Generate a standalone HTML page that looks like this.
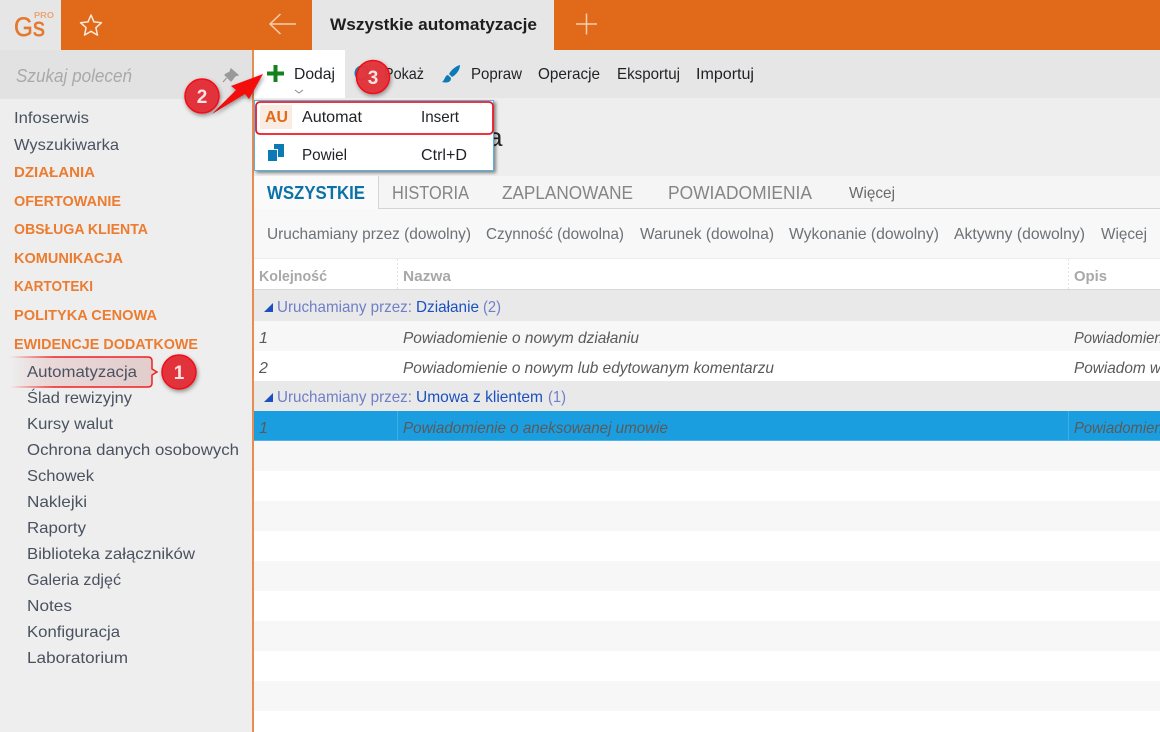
<!DOCTYPE html>
<html><head><meta charset="utf-8"><style>
html,body{margin:0;padding:0;width:1160px;height:732px;overflow:hidden;background:#fff}
svg{display:block}
text{font-family:"Liberation Sans",sans-serif;font-size:16px}
.s{fill:#4a5260}
.h{fill:#ec7c30;font-weight:bold;font-size:15px}
.t{fill:#1f2125}
.f{fill:#6c7176}
.c{fill:#a8a8a8;font-weight:bold;font-size:15px}
.i{fill:#5a5a5a;font-style:italic}
.g{fill:#6f7fc8}
.b{fill:#1b50c0}
.tab{fill:#858585;font-size:18px}
</style></head><body>
<svg width="1160" height="732" viewBox="0 0 1160 732" xmlns="http://www.w3.org/2000/svg">
<defs>
<filter id="sh" x="-30%" y="-30%" width="160%" height="160%"><feDropShadow dx="1" dy="2" stdDeviation="2" flood-color="#000" flood-opacity=".4"/></filter>
<filter id="sh2" x="-10%" y="-20%" width="120%" height="150%"><feDropShadow dx="2" dy="2" stdDeviation="1.5" flood-color="#000" flood-opacity=".45"/></filter>
<linearGradient id="fade" x1="0" x2="1" y1="0" y2="0"><stop offset="0" stop-color="#e8d4d4" stop-opacity="0"/><stop offset=".25" stop-color="#ead8d8"/><stop offset="1" stop-color="#e2cccc"/></linearGradient>
<linearGradient id="fl" x1="0" x2="1" y1="0" y2="0"><stop offset="0" stop-color="#f00" stop-opacity="0"/><stop offset=".3" stop-color="#f02020"/></linearGradient>
</defs>

<!-- top bar -->
<rect width="1160" height="50" fill="#e0691a"/>
<rect width="61" height="50" fill="#e6e6e6"/>
<text x="14" y="36" style="font-size:27px;fill:#e4792f;stroke:#e4792f;stroke-width:.5" textLength="31" lengthAdjust="spacingAndGlyphs">Gs</text>
<text x="34" y="18" style="font-size:8px;font-weight:bold;fill:#e9a574" textLength="20" lengthAdjust="spacingAndGlyphs">PRO</text>
<path d="M91 15l3 6.900 7.500.8-5.600 5 1.600 7.400-6.500-3.800-6.500 3.800 1.600-7.400-5.600-5 7.500-.8z" fill="none" stroke="#fbeade" stroke-width="1.500" stroke-linejoin="round"/>
<path d="M296 24H270M280.500 14L270 24l10.500 10" fill="none" stroke="#f6cfb0" stroke-width="1.500"/>
<rect x="312" y="0" width="242" height="50" fill="#e6e6e6"/>
<text x="330" y="30" style="font-size:17px;font-weight:bold;fill:#1e1e1e" textLength="207" lengthAdjust="spacingAndGlyphs">Wszystkie automatyzacje</text>
<path d="M586.500 13.500v21M576 24h21" stroke="#f6cfb0" stroke-width="1.500" fill="none"/>

<!-- sidebar -->
<rect x="0" y="50" width="252" height="682" fill="#eeeeee"/>
<rect x="0" y="50" width="252" height="49" fill="#e2e2e2"/>
<text x="16" y="82" style="font-size:18px;font-style:italic;fill:#a9a9a9" textLength="116" lengthAdjust="spacingAndGlyphs">Szukaj poleceń</text>
<path d="M231 69l7 6-3 1-3 4-1 1-6-6 1-1 4-2zM226.500 78l-3.500 4" fill="#999" stroke="#999" stroke-width="1.200"/>
<rect x="252" y="50" width="2" height="682" fill="#e58d52"/>

<g>
<text class="s" x="14" y="123" textLength="75" lengthAdjust="spacingAndGlyphs">Infoserwis</text>
<text class="s" x="14" y="150" textLength="105" lengthAdjust="spacingAndGlyphs">Wyszukiwarka</text>
<text class="h" x="14" y="177" textLength="81" lengthAdjust="spacingAndGlyphs">DZIAŁANIA</text>
<text class="h" x="14" y="206" textLength="107" lengthAdjust="spacingAndGlyphs">OFERTOWANIE</text>
<text class="h" x="14" y="234" textLength="134" lengthAdjust="spacingAndGlyphs">OBSŁUGA KLIENTA</text>
<text class="h" x="14" y="263" textLength="109" lengthAdjust="spacingAndGlyphs">KOMUNIKACJA</text>
<text class="h" x="14" y="291" textLength="79" lengthAdjust="spacingAndGlyphs">KARTOTEKI</text>
<text class="h" x="14" y="320" textLength="143" lengthAdjust="spacingAndGlyphs">POLITYKA CENOWA</text>
<text class="h" x="14" y="349" textLength="184" lengthAdjust="spacingAndGlyphs">EWIDENCJE DODATKOWE</text>
</g>

<!-- Callout 1 -->
<path d="M10 357H148q4 0 4 4v8l5 3-5 3v8q0 4-4 4H10z" fill="url(#fade)"/>
<path d="M10 357H148q4 0 4 4v8l5 3-5 3v8q0 4-4 4H10" fill="none" stroke="url(#fl)" stroke-width="1.500"/>

<g>
<text class="s" x="27" y="377" textLength="110" lengthAdjust="spacingAndGlyphs">Automatyzacja</text>
<text class="s" x="27" y="403" textLength="105" lengthAdjust="spacingAndGlyphs">Ślad rewizyjny</text>
<text class="s" x="27" y="429" textLength="86" lengthAdjust="spacingAndGlyphs">Kursy walut</text>
<text class="s" x="27" y="455" textLength="212" lengthAdjust="spacingAndGlyphs">Ochrona danych osobowych</text>
<text class="s" x="27" y="481" textLength="67" lengthAdjust="spacingAndGlyphs">Schowek</text>
<text class="s" x="27" y="507" textLength="60" lengthAdjust="spacingAndGlyphs">Naklejki</text>
<text class="s" x="27" y="533" textLength="59" lengthAdjust="spacingAndGlyphs">Raporty</text>
<text class="s" x="27" y="559" textLength="168" lengthAdjust="spacingAndGlyphs">Biblioteka załączników</text>
<text class="s" x="27" y="585" textLength="94" lengthAdjust="spacingAndGlyphs">Galeria zdjęć</text>
<text class="s" x="27" y="611" textLength="45" lengthAdjust="spacingAndGlyphs">Notes</text>
<text class="s" x="27" y="637" textLength="93" lengthAdjust="spacingAndGlyphs">Konfiguracja</text>
<text class="s" x="27" y="663" textLength="101" lengthAdjust="spacingAndGlyphs">Laboratorium</text>
</g>

<!-- toolbar -->
<rect x="254" y="50" width="906" height="48" fill="#e6e6e6"/>
<rect x="254" y="50" width="91" height="50" fill="#fff"/>
<path d="M275.500 65v17M267 73.500h17" stroke="#14801e" stroke-width="4" fill="none"/>
<text class="t" x="294" y="79" textLength="41" lengthAdjust="spacingAndGlyphs">Dodaj</text>
<path d="M295 90l4 3 4-3" fill="none" stroke="#888" stroke-width="1"/>
<circle cx="362" cy="73" r="6.500" fill="none" stroke="#1a7fb5" stroke-width="2"/>
<text class="t" x="384" y="79" textLength="40" lengthAdjust="spacingAndGlyphs">Pokaż</text>
<path d="M460 65c-4 1-9 5-11 9l3 3c4-2 8-7 8-12zM448 75c-3 0-3 5-6 7 4 1 9 1 9-4z" fill="#0c7ab5"/>
<text class="t" x="471" y="79" textLength="51" lengthAdjust="spacingAndGlyphs">Popraw</text>
<text class="t" x="538" y="79" textLength="62" lengthAdjust="spacingAndGlyphs">Operacje</text>
<text class="t" x="617" y="79" textLength="63" lengthAdjust="spacingAndGlyphs">Eksportuj</text>
<text class="t" x="696" y="79" textLength="58" lengthAdjust="spacingAndGlyphs">Importuj</text>

<!-- header zone -->
<rect x="254" y="98" width="906" height="78" fill="#eeeeee"/>
<text x="488" y="146" style="font-size:26px;fill:#222">a</text>

<!-- tabs -->
<rect x="254" y="176" width="906" height="33" fill="#f5f5f5"/>
<rect x="254" y="208" width="906" height="1" fill="#d4d4d4"/>
<rect x="254" y="176" width="124" height="33" fill="#fafafa"/>
<rect x="378" y="176" width="1" height="33" fill="#d4d4d4"/>
<text x="267" y="199" style="font-size:18px;font-weight:bold;fill:#0b72a8" textLength="98" lengthAdjust="spacingAndGlyphs">WSZYSTKIE</text>
<text class="tab" x="392" y="199" textLength="77" lengthAdjust="spacingAndGlyphs">HISTORIA</text>
<text class="tab" x="502" y="199" textLength="131" lengthAdjust="spacingAndGlyphs">ZAPLANOWANE</text>
<text class="tab" x="668" y="199" textLength="144" lengthAdjust="spacingAndGlyphs">POWIADOMIENIA</text>
<text x="849" y="198" style="fill:#6a6a6a" textLength="46" lengthAdjust="spacingAndGlyphs">Więcej</text>

<!-- filters -->
<rect x="254" y="209" width="906" height="49" fill="#f8f8f8"/>
<text class="f" x="267" y="239" textLength="204" lengthAdjust="spacingAndGlyphs">Uruchamiany przez (dowolny)</text>
<text class="f" x="486" y="239" textLength="138" lengthAdjust="spacingAndGlyphs">Czynność (dowolna)</text>
<text class="f" x="640" y="239" textLength="134" lengthAdjust="spacingAndGlyphs">Warunek (dowolna)</text>
<text class="f" x="789" y="239" textLength="150" lengthAdjust="spacingAndGlyphs">Wykonanie (dowolny)</text>
<text class="f" x="954" y="239" textLength="131" lengthAdjust="spacingAndGlyphs">Aktywny (dowolny)</text>
<text class="f" x="1101" y="239" textLength="46" lengthAdjust="spacingAndGlyphs">Więcej</text>

<!-- grid header -->
<rect x="254" y="258" width="906" height="1" fill="#ececec"/>
<rect x="254" y="259" width="906" height="30" fill="#fff"/>
<rect x="254" y="289" width="906" height="1" fill="#d8d8d8"/>
<path d="M397.500 259v31M1068.500 259v31" stroke="#e2e2e2" stroke-dasharray="2 2"/>
<text class="c" x="259" y="281" textLength="68" lengthAdjust="spacingAndGlyphs">Kolejność</text>
<text class="c" x="403" y="281" textLength="48" lengthAdjust="spacingAndGlyphs">Nazwa</text>
<text class="c" x="1074" y="281" textLength="33" lengthAdjust="spacingAndGlyphs">Opis</text>

<!-- rows -->
<rect x="254" y="290" width="906" height="31" fill="#e9e9e9"/>
<path d="M264 312l9-9v9z" fill="#1c50c0"/>
<text class="g" x="277" y="312" textLength="135" lengthAdjust="spacingAndGlyphs">Uruchamiany przez:</text>
<text class="b" x="416" y="312" textLength="63" lengthAdjust="spacingAndGlyphs">Działanie</text>
<text class="g" x="483" y="312" textLength="18" lengthAdjust="spacingAndGlyphs">(2)</text>

<rect x="254" y="321" width="906" height="30" fill="#f7f7f7"/>
<text class="i" x="259" y="343">1</text>
<text class="i" x="403" y="343" textLength="236" lengthAdjust="spacingAndGlyphs">Powiadomienie o nowym działaniu</text>
<text class="i" x="1074" y="343" textLength="100" lengthAdjust="spacingAndGlyphs">Powiadomienie</text>

<rect x="254" y="351" width="906" height="30" fill="#fff"/>
<text class="i" x="259" y="373">2</text>
<text class="i" x="403" y="373" textLength="371" lengthAdjust="spacingAndGlyphs">Powiadomienie o nowym lub edytowanym komentarzu</text>
<text class="i" x="1074" y="373" textLength="87" lengthAdjust="spacingAndGlyphs">Powiadom w</text>

<rect x="254" y="381" width="906" height="30" fill="#e9e9e9"/>
<path d="M264 402l9-9v9z" fill="#1c50c0"/>
<text class="g" x="277" y="402" textLength="135" lengthAdjust="spacingAndGlyphs">Uruchamiany przez:</text>
<text class="b" x="416" y="402" textLength="127" lengthAdjust="spacingAndGlyphs">Umowa z klientem</text>
<text class="g" x="548" y="402" textLength="18" lengthAdjust="spacingAndGlyphs">(1)</text>

<rect x="254" y="411" width="906" height="30" fill="#1b9ee0"/>
<path d="M397.500 411v30M1068.500 411v30" stroke="#42ace6"/>
<rect x="254" y="440" width="906" height="1" fill="#4db2e8"/>
<text class="i" x="259" y="433">1</text>
<text class="i" x="403" y="433" textLength="265" lengthAdjust="spacingAndGlyphs">Powiadomienie o aneksowanej umowie</text>
<text class="i" x="1074" y="433" textLength="100" lengthAdjust="spacingAndGlyphs">Powiadomienie</text>

<rect x="254" y="441" width="906" height="30" fill="#f7f7f7"/>
<rect x="254" y="501" width="906" height="30" fill="#f7f7f7"/>
<rect x="254" y="561" width="906" height="30" fill="#f7f7f7"/>
<rect x="254" y="621" width="906" height="30" fill="#f7f7f7"/>
<rect x="254" y="681" width="906" height="30" fill="#f7f7f7"/>

<!-- dropdown -->
<rect x="254.500" y="100.500" width="239" height="70" fill="#fff" stroke="#55b3e2" filter="url(#sh2)"/>
<rect x="260" y="105" width="32" height="24" fill="#f9ece2"/>
<text x="265" y="122" style="font-size:16px;font-weight:bold;fill:#e0691a" textLength="23" lengthAdjust="spacingAndGlyphs">AU</text>
<text class="t" x="302" y="122" textLength="60" lengthAdjust="spacingAndGlyphs">Automat</text>
<text class="t" x="421" y="122" textLength="38" lengthAdjust="spacingAndGlyphs">Insert</text>
<rect x="256" y="102" width="237" height="32" rx="4" fill="none" stroke="#f01622" stroke-width="1.800"/>
<rect x="274" y="144" width="10" height="13" fill="#0c7ab5"/>
<rect x="267" y="149" width="11" height="13" fill="#fff"/>
<rect x="268" y="150" width="9" height="11" fill="#0c7ab5"/>
<text class="t" x="302" y="160" textLength="45" lengthAdjust="spacingAndGlyphs">Powiel</text>
<text class="t" x="421" y="160" textLength="46" lengthAdjust="spacingAndGlyphs">Ctrl+D</text>

<!-- arrow 2 -->
<path d="M212 114L236 90l-5-4 32-12-14 25-4-5z" fill="#f40a10" filter="url(#sh)"/>

<!-- badges -->
<g filter="url(#sh)">
<circle cx="179" cy="372" r="17" fill="#e2313a" stroke="#f01018" stroke-width="1.500"/>
<circle cx="202" cy="96" r="17" fill="#e2313a" stroke="#f01018" stroke-width="1.500"/>
<circle cx="373" cy="77" r="16.500" fill="#e2313a" fill-opacity=".95" stroke="#f01018" stroke-width="1.500"/>
</g>
<text x="179" y="379" text-anchor="middle" style="font-size:19px;font-weight:bold;fill:#fbe4e4">1</text>
<text x="202" y="103" text-anchor="middle" style="font-size:19px;font-weight:bold;fill:#fbe4e4">2</text>
<text x="373" y="84" text-anchor="middle" style="font-size:19px;font-weight:bold;fill:#fbe4e4">3</text>
</svg>
</body></html>
